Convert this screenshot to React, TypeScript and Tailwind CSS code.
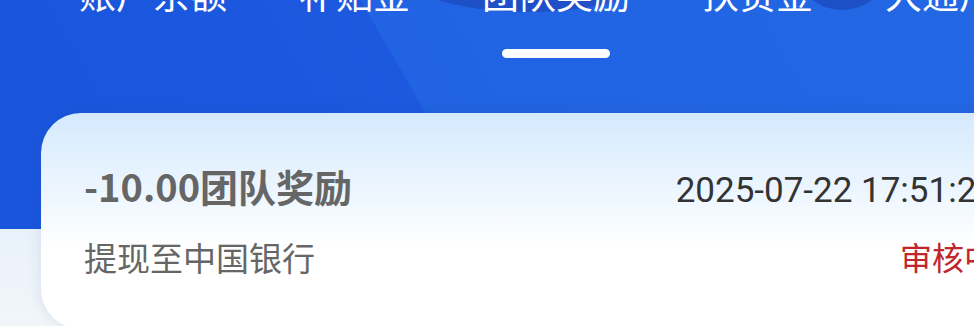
import * as React from "react"

const tabs = ["账户余额", "补贴金", "团队奖励", "扶贫金", "大通户"]

const font = { fontFamily: "Roboto, 'Noto Sans CJK SC', sans-serif" }

function TabBar({ active }: { active: number }) {
  return (
    <div className="relative flex pl-[43px]">
      {tabs.map((label, i) => (
        <div key={label} className="flex flex-col items-center px-[36px]">
          <span className="mt-[-22px] whitespace-nowrap text-[37px] leading-[37px] text-white">
            {label}
          </span>
          {i === active ? (
            <span className="mt-[34px] h-[9px] w-[108px] rounded-full bg-white" />
          ) : (
            <span className="mt-[34px] h-[9px]" />
          )}
        </div>
      ))}
    </div>
  )
}

function RecordCard() {
  return (
    <div className="mx-[41px] mt-[55px] h-[216px] rounded-[40px] bg-[linear-gradient(180deg,#d4e9fd_0%,#f3f9ff_45%,#ffffff_62%)] px-[43px] pt-[54px] shadow-[0_0_14px_rgba(40,60,100,0.12)]">
      <div className="flex items-baseline justify-between">
        <span className="font-['Noto_Sans_CJK_SC',sans-serif] text-[38px] font-bold leading-[38px] text-[#666666]">
          -10.00团队奖励
        </span>
        <span className="text-[35px] leading-[35px] text-[#333333]">2025-07-22 17:51:29</span>
      </div>
      <div className="mt-[35px] flex items-start justify-between">
        <span className="text-[33px] leading-[33px] text-[#666666]">提现至中国银行</span>
        <span className="text-[32px] leading-[33px] text-[#c0262b]">审核中</span>
      </div>
    </div>
  )
}

export default function App() {
  return (
    <div className="h-[326px] w-[974px] overflow-hidden bg-[#f3f6fa]" style={font}>
      <div className="relative w-[1080px]">
        {/* blue header background */}
        <div className="absolute inset-x-0 top-0 h-[229px] bg-[linear-gradient(60deg,#1a55dd_0%,#1c59df_40.6%,#2163e3_40.7%,#2368e5_100%)]" />
        <div className="absolute inset-x-0 top-[229px] h-[120px] bg-[linear-gradient(180deg,#e9f1fa_0%,#f4f7fb_100%)]" />
        {/* decorative blobs peeking under the tabs */}
        <div className="absolute left-[400px] top-[-70px] h-[82px] w-[258px] rounded-[50%] bg-[linear-gradient(90deg,#1c4fc6_0%,#2150c8_75%,#5a5ccc_100%)]" />
        <div className="absolute left-[800px] top-[-60px] h-[70px] w-[84px] rounded-[50%] bg-[#1d4fc7]" />
        <div className="relative">
          <TabBar active={2} />
          <RecordCard />
        </div>
      </div>
    </div>
  )
}
